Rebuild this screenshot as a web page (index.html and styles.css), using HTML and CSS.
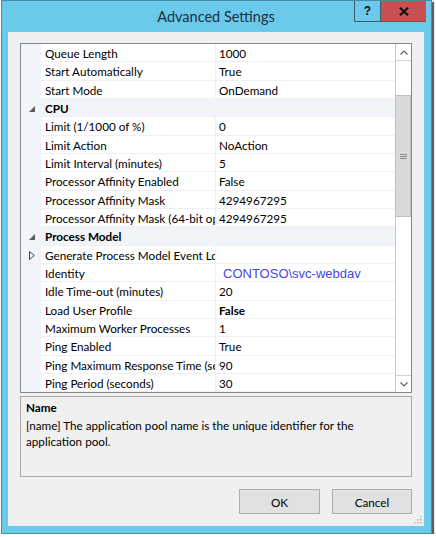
FILE: index.html
```html
<!DOCTYPE html>
<html>
<head>
<meta charset="utf-8">
<link rel="stylesheet" href="styles.css">
</head>
<body>
<div class="window">
  <div class="titlebar">
    <div></div>
    <div class="title">Advanced Settings</div>
    <div class="caps">
      <div class="cap-help">?</div>
      <div class="cap-close"><svg width="10" height="9" viewBox="0 0 10 9"><path d="M1 0.8 L9 8.2 M9 0.8 L1 8.2" stroke="#111" stroke-width="2.2" fill="none"/></svg></div>
    </div>
  </div>
  <div class="panel">
    <div class="propgrid">
      <div class="rows">
        <div class="row"><div class="gut"></div><div class="name">Queue Length</div><div class="val">1000</div></div>
        <div class="row"><div class="gut"></div><div class="name">Start Automatically</div><div class="val">True</div></div>
        <div class="row"><div class="gut"></div><div class="name">Start Mode</div><div class="val">OnDemand</div></div>
        <div class="row cat"><div class="gut"><svg width="6" height="6" viewBox="0 0 6 6"><polygon points="6,0 6,6 0,6" fill="#5a5a5a"/></svg></div><div class="name">CPU</div><div class="val"></div></div>
        <div class="row"><div class="gut"></div><div class="name">Limit (1/1000 of %)</div><div class="val">0</div></div>
        <div class="row"><div class="gut"></div><div class="name">Limit Action</div><div class="val">NoAction</div></div>
        <div class="row"><div class="gut"></div><div class="name">Limit Interval (minutes)</div><div class="val">5</div></div>
        <div class="row"><div class="gut"></div><div class="name">Processor Affinity Enabled</div><div class="val">False</div></div>
        <div class="row"><div class="gut"></div><div class="name">Processor Affinity Mask</div><div class="val">4294967295</div></div>
        <div class="row"><div class="gut"></div><div class="name">Processor Affinity Mask (64-bit option)</div><div class="val">4294967295</div></div>
        <div class="row cat"><div class="gut"><svg width="6" height="6" viewBox="0 0 6 6"><polygon points="6,0 6,6 0,6" fill="#5a5a5a"/></svg></div><div class="name">Process Model</div><div class="val"></div></div>
        <div class="row"><div class="gut"><svg width="6" height="9" viewBox="0 0 6 9"><polygon points="0.5,0.5 5.3,4.5 0.5,8.5" fill="none" stroke="#444" stroke-width="1"/></svg></div><div class="name">Generate Process Model Event Log Entry</div><div class="val"></div></div>
        <div class="row"><div class="gut"></div><div class="name">Identity</div><div class="val"><span class="acct">CONTOSO\svc-webdav</span></div></div>
        <div class="row"><div class="gut"></div><div class="name">Idle Time-out (minutes)</div><div class="val">20</div></div>
        <div class="row"><div class="gut"></div><div class="name">Load User Profile</div><div class="val"><b>False</b></div></div>
        <div class="row"><div class="gut"></div><div class="name">Maximum Worker Processes</div><div class="val">1</div></div>
        <div class="row"><div class="gut"></div><div class="name">Ping Enabled</div><div class="val">True</div></div>
        <div class="row"><div class="gut"></div><div class="name">Ping Maximum Response Time (seconds)</div><div class="val">90</div></div>
        <div class="row"><div class="gut"></div><div class="name">Ping Period (seconds)</div><div class="val">30</div></div>
      </div>
      <div class="vscroll">
        <div class="sb-btn up"><svg width="8" height="5" viewBox="0 0 8 5"><path d="M0.5 4.5 L4 1 L7.5 4.5" stroke="#606060" stroke-width="1.2" fill="none"/></svg></div>
        <div class="track">
          <div class="thumb"><svg width="7" height="5" viewBox="0 0 7 5"><path d="M0 0.5 H7 M0 2.5 H7 M0 4.5 H7" stroke="#8a8a8a" stroke-width="1"/></svg></div>
        </div>
        <div class="sb-btn down"><svg width="8" height="5" viewBox="0 0 8 5"><path d="M0.5 0.5 L4 4 L7.5 0.5" stroke="#606060" stroke-width="1.2" fill="none"/></svg></div>
      </div>
    </div>
    <div class="desc">
      <div class="desc-title">Name</div>
      <div class="desc-text">[name] The application pool name is the unique identifier for the application pool.</div>
    </div>
    <div class="buttons">
      <div class="btn ok">OK</div>
      <div class="btn cancel">Cancel</div>
    </div>
    <svg class="grip" width="8" height="8" viewBox="0 0 8 8"><g fill="#b5b5b5"><rect x="6" y="0" width="1.5" height="1.5"/><rect x="3" y="3" width="1.5" height="1.5"/><rect x="6" y="3" width="1.5" height="1.5"/><rect x="0" y="6" width="1.5" height="1.5"/><rect x="3" y="6" width="1.5" height="1.5"/><rect x="6" y="6" width="1.5" height="1.5"/></g></svg>
  </div>
</div>
</body>
</html>
```

FILE: styles.css
```css
body {
  margin: 0;
  background: #ffffff;
  font-family: Lato, "Open Sans", sans-serif;
  font-size: 11.7px;
  color: #000;
}

.window {
  box-sizing: border-box;
  width: 431px;
  height: 534px;
  margin-left: 1px;
  border: 1px solid #4d8aa6;
  background: #6bcaea;
  padding: 0 7px 7px 6px;
  display: flex;
  flex-direction: column;
  box-shadow: 2px 2px 1px rgba(40, 40, 40, 0.75);
}

.titlebar {
  height: 31px;
  flex: none;
  display: grid;
  grid-template-columns: 1fr auto 1fr;
  align-items: start;
}

.title {
  font-size: 14.5px;
  line-height: 32px;
  color: #1b2f3c;
}

.caps {
  justify-self: end;
  display: flex;
  margin-right: -2px;
}

.cap-help {
  box-sizing: border-box;
  width: 27px;
  height: 21px;
  border: 1px solid #3a5c6c;
  border-top: 0;
  display: flex;
  align-items: center;
  justify-content: center;
  font-family: "Liberation Sans", Arial, sans-serif;
  font-weight: bold;
  font-size: 12px;
  color: #111;
}

.cap-close {
  box-sizing: border-box;
  width: 45px;
  height: 21px;
  background: #c75050;
  border-bottom: 1px solid #9c4040;
  display: flex;
  align-items: center;
  justify-content: center;
}

.panel {
  flex: 1;
  position: relative;
  background: #f0f0f0;
  padding: 11px 12px 12px;
  display: flex;
  flex-direction: column;
}

.propgrid {
  box-sizing: border-box;
  height: 350px;
  flex: none;
  border: 1px solid #828790;
  background: #fff;
  display: flex;
}

.rows {
  flex: 1;
  overflow: hidden;
}

.row {
  display: grid;
  grid-template-columns: 20px 174px 1fr;
  height: 18.33px;
}

.gut {
  background: #f1f4f9;
  display: flex;
  align-items: center;
  padding-left: 8px;
  padding-top: 1px;
}

.name,
.val {
  box-sizing: border-box;
  border-bottom: 1px solid #f0f0f0;
  white-space: nowrap;
  overflow: hidden;
  line-height: 17.33px;
  padding-top: 1px;
}

.name {
  padding-left: 4px;
}

.val {
  border-left: 1px solid #f0f0f0;
  padding-left: 3px;
}

.row.cat {
  background: #f1f4f9;
}

.row.cat .name {
  font-weight: bold;
}

.row.cat .val {
  border-left-color: transparent;
}

.acct {
  font-family: "Liberation Sans", Arial, sans-serif;
  font-size: 13px;
  color: #4747e0;
  padding-left: 4px;
}

.vscroll {
  box-sizing: border-box;
  width: 16px;
  border-left: 1px solid #c8c8c8;
  display: flex;
  flex-direction: column;
}

.sb-btn {
  height: 17px;
  flex: none;
  box-sizing: border-box;
  display: flex;
  align-items: center;
  justify-content: center;
}

.sb-btn.up {
  border-bottom: 1px solid #d4d4d4;
}

.sb-btn.down {
  border-top: 1px solid #d4d4d4;
}

.track {
  flex: 1;
}

.thumb {
  box-sizing: border-box;
  margin-top: 34px;
  margin-left: -1px;
  height: 122px;
  background: #dadada;
  border: 1px solid #c2c2c2;
  display: flex;
  align-items: center;
  justify-content: center;
}

.desc {
  box-sizing: border-box;
  margin-top: 3px;
  height: 81px;
  flex: none;
  border: 1px solid #a8a8a8;
  padding: 2px 8px 0 5px;
}

.desc-title {
  font-weight: bold;
  line-height: 16px;
  margin-bottom: 2px;
}

.desc-text {
  line-height: 16px;
}

.buttons {
  margin-top: 12px;
  display: flex;
  justify-content: flex-end;
  gap: 12px;
}

.btn {
  box-sizing: border-box;
  height: 25px;
  border: 1px solid #adadad;
  background: #e1e1e1;
  display: flex;
  align-items: center;
  justify-content: center;
}

.btn.ok {
  width: 81px;
}

.btn.cancel {
  width: 80px;
}

.grip {
  position: absolute;
  right: 2px;
  bottom: 2px;
}
```
